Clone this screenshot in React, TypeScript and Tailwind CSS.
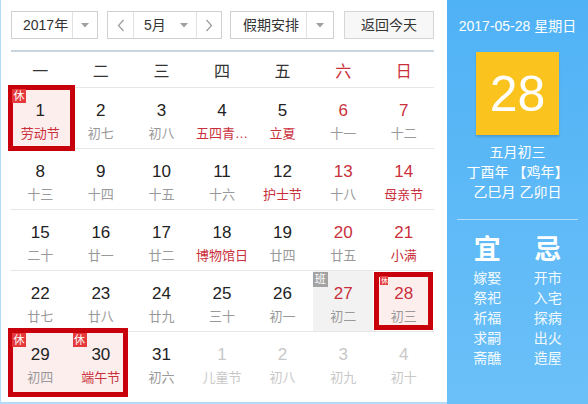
import React from "react";

type Day = {
  d: number;
  lunar: string;
  redNum?: boolean;
  redLunar?: boolean;
  faded?: boolean;
  rest?: boolean;
  work?: boolean;
  box?: "single" | "pair" | "today";
};

const WEEK = ["一", "二", "三", "四", "五", "六", "日"];

const ROWS: Day[][] = [
  [
    { d: 1, lunar: "劳动节", redLunar: true, rest: true, box: "single" },
    { d: 2, lunar: "初七" },
    { d: 3, lunar: "初八" },
    { d: 4, lunar: "五四青…", redLunar: true },
    { d: 5, lunar: "立夏", redLunar: true },
    { d: 6, lunar: "十一", redNum: true },
    { d: 7, lunar: "十二", redNum: true },
  ],
  [
    { d: 8, lunar: "十三" },
    { d: 9, lunar: "十四" },
    { d: 10, lunar: "十五" },
    { d: 11, lunar: "十六" },
    { d: 12, lunar: "护士节", redLunar: true },
    { d: 13, lunar: "十八", redNum: true },
    { d: 14, lunar: "母亲节", redNum: true, redLunar: true },
  ],
  [
    { d: 15, lunar: "二十" },
    { d: 16, lunar: "廿一" },
    { d: 17, lunar: "廿二" },
    { d: 18, lunar: "博物馆日", redLunar: true },
    { d: 19, lunar: "廿四" },
    { d: 20, lunar: "廿五", redNum: true },
    { d: 21, lunar: "小满", redNum: true, redLunar: true },
  ],
  [
    { d: 22, lunar: "廿七" },
    { d: 23, lunar: "廿八" },
    { d: 24, lunar: "廿九" },
    { d: 25, lunar: "三十" },
    { d: 26, lunar: "初一" },
    { d: 27, lunar: "初二", redNum: true, work: true },
    { d: 28, lunar: "初三", redNum: true, box: "today" },
  ],
  [
    { d: 29, lunar: "初四", rest: true, box: "pair" },
    { d: 30, lunar: "端午节", redLunar: true, rest: true },
    { d: 31, lunar: "初六" },
    { d: 1, lunar: "儿童节", faded: true },
    { d: 2, lunar: "初八", faded: true },
    { d: 3, lunar: "初九", faded: true },
    { d: 4, lunar: "初十", faded: true },
  ],
];

const YI = ["嫁娶", "祭祀", "祈福", "求嗣", "斋醮"];
const JI = ["开市", "入宅", "探病", "出火", "造屋"];

function Caret() {
  return (
    <svg width="8" height="5" viewBox="0 0 8 5">
      <polygon points="0,0 8,0 4,4.5" fill="#a0a0a0" />
    </svg>
  );
}

function Chevron({ dir }: { dir: "left" | "right" }) {
  return (
    <svg width="8" height="13" viewBox="0 0 8 13">
      <polyline
        points={dir === "left" ? "6.5,1 1.5,6.5 6.5,12" : "1.5,1 6.5,6.5 1.5,12"}
        fill="none"
        stroke="#9a9a9a"
        strokeWidth="1.2"
      />
    </svg>
  );
}

function Cell({ day }: { day: Day }) {
  const numColor = day.faded ? "text-[#c8c8c8]" : day.redNum ? "text-[#c9303b]" : "text-[#222]";
  const lunarColor = day.faded ? "text-[#c8c8c8]" : day.redLunar ? "text-[#c9303b]" : "text-[#999]";
  return (
    <div className={`relative h-full ${day.work ? "bg-[#f2f2f2]" : ""}`}>
      {day.box === "single" && (
        <div className="absolute left-[-2px] right-[-4px] top-[-3px] bottom-[-3px] border-[5px] border-[#c8000b] bg-[#fdeeee]" />
      )}
      {day.box === "pair" && (
        <div className="absolute left-[-2px] right-[-57px] top-[-4px] bottom-[-5px] border-[5px] border-[#c8000b] bg-[#fdeeee]" />
      )}
      {day.box === "today" && (
        <div className="absolute inset-[1px] border-[5px] border-[#c8000b] bg-[#fdeeee]" />
      )}
      {day.rest && (
        <span className="absolute left-[2px] top-[1px] z-[2] w-[14px] h-[14px] bg-[#e5393c] text-white text-[11px] leading-[14px] text-center">
          休
        </span>
      )}
      {day.work && (
        <span className="absolute left-0 top-[1px] z-[2] w-[15px] h-[15px] bg-[#a3a3a3] text-white text-[11px] leading-[15px] text-center">
          班
        </span>
      )}
      {day.box === "today" && (
        <span className="absolute left-[7px] top-[5px] z-[2] w-[8px] h-[9px] bg-[#e5393c] text-white text-[7px] leading-[9px] text-center">
          休
        </span>
      )}
      <div className="relative z-[1] flex flex-col items-center pt-[13px]">
        <span className={`text-[17px] leading-[20px] ${numColor}`}>{day.d}</span>
        <span className={`mt-[5px] text-[13px] leading-[16px] whitespace-nowrap ${lunarColor}`}>{day.lunar}</span>
      </div>
    </div>
  );
}

export default function App() {
  return (
    <div className="flex w-[588px] h-[404px] bg-white font-['Liberation_Sans','Noto_Sans_CJK_SC',sans-serif] text-[#333]">
      {/* 左侧日历 */}
      <div className="w-[447px] h-full border-l border-b-2 border-[#b3daf6] pl-[9px] pr-[13px] pt-[11px]">
        <div className="flex items-center h-[28px] ml-[1px] text-[14px]">
          <div className="flex w-[87px] h-full border border-[#d0d0d0] bg-white">
            <div className="flex-1 flex items-center pl-[11px]">2017年</div>
            <div className="w-[25px] flex items-center justify-center border-l border-[#e2e2e2]">
              <Caret />
            </div>
          </div>
          <div className="ml-[9px] flex w-[115px] h-full border border-[#d0d0d0] bg-white">
            <div className="w-[25px] flex items-center justify-center">
              <Chevron dir="left" />
            </div>
            <div className="flex-1 flex items-center border-l border-[#e2e2e2] pl-[10px] pr-[8px] justify-between">
              <span>5月</span>
              <Caret />
            </div>
            <div className="w-[25px] flex items-center justify-center border-l border-[#e2e2e2]">
              <Chevron dir="right" />
            </div>
          </div>
          <div className="ml-[8px] flex w-[104px] h-full border border-[#d0d0d0] bg-white">
            <div className="flex-1 flex items-center pl-[12px]">假期安排</div>
            <div className="w-[27px] flex items-center justify-center border-l border-[#e2e2e2]">
              <Caret />
            </div>
          </div>
          <button className="ml-[10px] w-[90px] h-full border border-[#d6d6d6] bg-[#f7f7f7] text-[14px] text-[#333]">
            返回今天
          </button>
        </div>

        <div className="mt-[11px] ml-[1px] h-[2px] bg-[#c9d5df]" />

        <div className="grid grid-cols-7 h-[35px] pt-[10px] text-[16px] leading-[20px] text-center">
          {WEEK.map((w, i) => (
            <div key={w} className={i >= 5 ? "text-[#c9303b]" : "text-[#333]"}>
              {w}
            </div>
          ))}
        </div>

        {ROWS.map((row, ri) => (
          <div key={ri} className="grid grid-cols-7 h-[61px] border-t border-[#e6e6e6]">
            {row.map((day, di) => (
              <Cell key={di} day={day} />
            ))}
          </div>
        ))}
      </div>

      {/* 右侧当天信息 */}
      <div className="w-[141px] h-full bg-linear-to-b from-[#4fb2f5] to-[#6bc0f8] px-[10px] pt-[16px] text-white flex flex-col items-center">
        <div className="text-[14px] leading-[20px] whitespace-nowrap">2017-05-28 星期日</div>
        <div className="mt-[16px] w-[83px] h-[83px] bg-[#fac31e] shadow-[0_2px_2px_rgba(0,0,0,0.15)] flex items-center justify-center text-[50px] leading-none">
          28
        </div>
        <div className="mt-[7px] text-[14px] leading-[20px] text-center whitespace-nowrap">
          <div>五月初三</div>
          <div>丁酉年 【鸡年】</div>
          <div>乙巳月 乙卯日</div>
        </div>
        <div className="mt-[17px] w-full h-px bg-white/50" />
        <div className="mt-[14px] w-full grid grid-cols-2 text-center">
          <div className="text-[27px] leading-[32px] font-bold">宜</div>
          <div className="text-[27px] leading-[32px] font-bold">忌</div>
          <div className="mt-[2px] text-[14px] leading-[20px] text-white/95">
            {YI.map((t) => (
              <div key={t}>{t}</div>
            ))}
          </div>
          <div className="mt-[2px] text-[14px] leading-[20px] text-white/95">
            {JI.map((t) => (
              <div key={t}>{t}</div>
            ))}
          </div>
        </div>
      </div>
    </div>
  );
}
